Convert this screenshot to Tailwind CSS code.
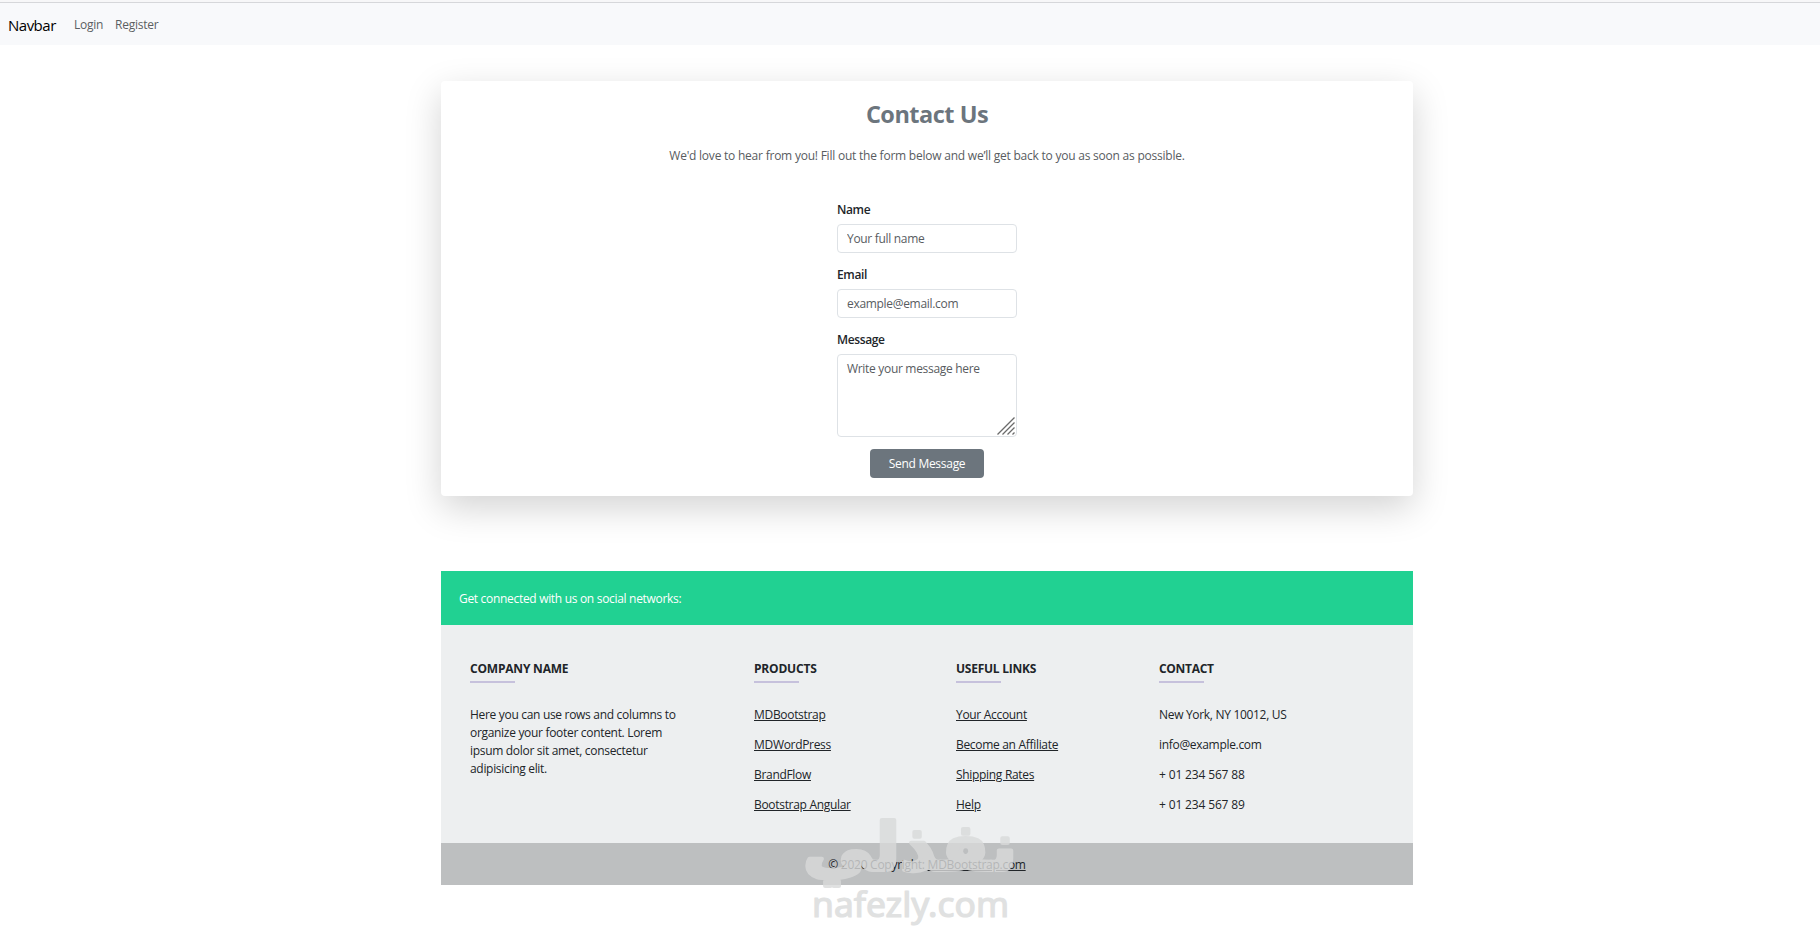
<!DOCTYPE html>
<html lang="en">
  <head>
    <meta charset="UTF-8" />
    <meta name="viewport" content="width=device-width, initial-scale=1.0" />
    <title>Contact Us</title>
    <script src="https://cdn.jsdelivr.net/npm/@tailwindcss/browser@4"></script>
  </head>
  <body
    class="relative bg-white h-[926px] overflow-hidden font-['Open_Sans','Noto_Sans',sans-serif] text-[12px] tracking-[-0.31px] leading-[18px] text-[#212529]"
  >
    <!-- Navbar -->
    <div class="h-[3px] bg-[#f7f7f8] border-b border-[#d6d7da]"></div>
    <nav class="h-[42px] pt-[2px] bg-[#f8f9fb] flex items-center pl-2">
      <a href="#" class="-mt-px text-[15px] tracking-[-0.5px] text-black w-[66px]">Navbar</a>
      <a href="#" class="text-[#5b5f62] tracking-[-0.25px] w-[41px]">Login</a>
      <a href="#" class="text-[#5b5f62] tracking-[-0.25px]">Register</a>
    </nav>

    <div class="ml-[441px] w-[972px]">
      <!-- Contact card -->
      <section
        class="mt-[36px] h-[415px] rounded-[4px] bg-white p-[18px] flex flex-col items-center shadow-[0_12px_36px_rgba(0,0,0,0.175)]"
      >
        <h2 class="mt-px text-[23.5px] tracking-[-0.5px] leading-[29px] font-bold text-[#6c757d]">Contact Us</h2>
        <p class="mt-[18px] text-[#585c5f] tracking-[-0.225px]">
          We'd love to hear from you! Fill out the form below and we’ll get back to you as soon as possible.
        </p>

        <form class="mt-[36px] w-[180px] flex flex-col">
          <label for="name" class="font-semibold tracking-[-0.38px]">Name</label>
          <input id="name" type="text" placeholder="Your full name"
            class="mt-[5px] mb-[13px] h-[29px] rounded-[4px] border border-[#dee2e6] px-[9px] placeholder:text-[#585c5f]" />
          <label for="email" class="font-semibold tracking-[-0.38px]">Email</label>
          <input id="email" type="email" placeholder="example@email.com"
            class="mt-[5px] mb-[13px] h-[29px] rounded-[4px] border border-[#dee2e6] px-[9px] placeholder:text-[#585c5f]" />
          <label for="message" class="font-semibold tracking-[-0.38px]">Message</label>
          <div class="relative mt-[5px] mb-3 h-[83px]">
            <textarea id="message" placeholder="Write your message here"
              class="block w-full h-full resize-none rounded-[4px] border border-[#dee2e6] px-[9px] py-[5px] placeholder:text-[#585c5f]"></textarea>
            <svg class="absolute right-[2px] bottom-[2px]" width="18" height="18" viewBox="0 0 18 18" stroke="#6b6b6b" stroke-width="1.3">
              <path d="M0.5 17.5L17.5 0.5M5.5 17.5L17.5 5.5M10.5 17.5L17.5 10.5M15.5 17.5L17.5 15.5" />
            </svg>
          </div>
          <button type="button" class="self-center w-[114px] h-[29px] rounded-[4px] bg-[#6c757d] text-white tracking-[-0.28px]">
            Send Message
          </button>
        </form>
      </section>

      <!-- Footer -->
      <footer class="mt-[75px]">
        <div class="h-[54px] bg-[#21d192] text-white px-[18px] pt-px flex items-center">
          Get connected with us on social networks:
        </div>

        <div class="h-[218px] bg-[#edeff0] pt-[35px] pl-[29px] flex">
          <div class="w-[284px]">
            <h6 class="font-bold tracking-[-0.2px]">COMPANY NAME</h6>
            <hr class="mt-[3px] mb-[23px] w-[45px] border-t-2 border-[#c6c1dc]" />
            <p class="w-[220px]">
              Here you can use rows and columns to<br />organize your footer content. Lorem<br />ipsum dolor sit amet, consectetur<br />adipisicing elit.
            </p>
          </div>
          <div class="w-[202px]">
            <h6 class="font-bold tracking-[-0.2px]">PRODUCTS</h6>
            <hr class="mt-[3px] mb-[23px] w-[45px] border-t-2 border-[#c6c1dc]" />
            <ul class="flex flex-col gap-3">
              <li><a href="#" class="underline">MDBootstrap</a></li>
              <li><a href="#" class="underline">MDWordPress</a></li>
              <li><a href="#" class="underline">BrandFlow</a></li>
              <li><a href="#" class="underline">Bootstrap Angular</a></li>
            </ul>
          </div>
          <div class="w-[203px]">
            <h6 class="font-bold tracking-[-0.25px]">USEFUL LINKS</h6>
            <hr class="mt-[3px] mb-[23px] w-[45px] border-t-2 border-[#c6c1dc]" />
            <ul class="flex flex-col gap-3">
              <li><a href="#" class="underline">Your Account</a></li>
              <li><a href="#" class="underline">Become an Affiliate</a></li>
              <li><a href="#" class="underline">Shipping Rates</a></li>
              <li><a href="#" class="underline">Help</a></li>
            </ul>
          </div>
          <div>
            <h6 class="font-bold">CONTACT</h6>
            <hr class="mt-[3px] mb-[23px] w-[45px] border-t-2 border-[#c6c1dc]" />
            <ul class="flex flex-col gap-3">
              <li>New York, NY 10012, US</li>
              <li>info@example.com</li>
              <li class="tracking-[-0.15px]">+ 01 234 567 88</li>
              <li class="tracking-[-0.15px]">+ 01 234 567 89</li>
            </ul>
          </div>
        </div>

        <div class="h-[42px] pt-px bg-[#bdbfc0] flex items-center justify-center">
          <span class="tracking-[-0.27px]">© 2020 Copyright: <a href="#" class="underline">MDBootstrap.com</a></span>
        </div>
      </footer>
    </div>

    <!-- Watermark over the footer -->
    <svg class="absolute left-[780px] top-[800px] pointer-events-none opacity-80 tracking-normal" width="280" height="126" viewBox="0 0 280 126" fill="#d9dada" stroke="#d9dada" stroke-linejoin="round">
      <text x="130" y="70" direction="rtl" text-anchor="middle" textLength="214" lengthAdjust="spacingAndGlyphs"
        font-family="DejaVu Sans" font-weight="bold" font-size="66" stroke-width="4">نفذلي</text>
      <text x="32" y="117" textLength="197" lengthAdjust="spacingAndGlyphs"
        font-family="Noto Sans" font-weight="400" font-size="34" stroke-width="1.2">nafezly.com</text>
    </svg>
  </body>
</html>
